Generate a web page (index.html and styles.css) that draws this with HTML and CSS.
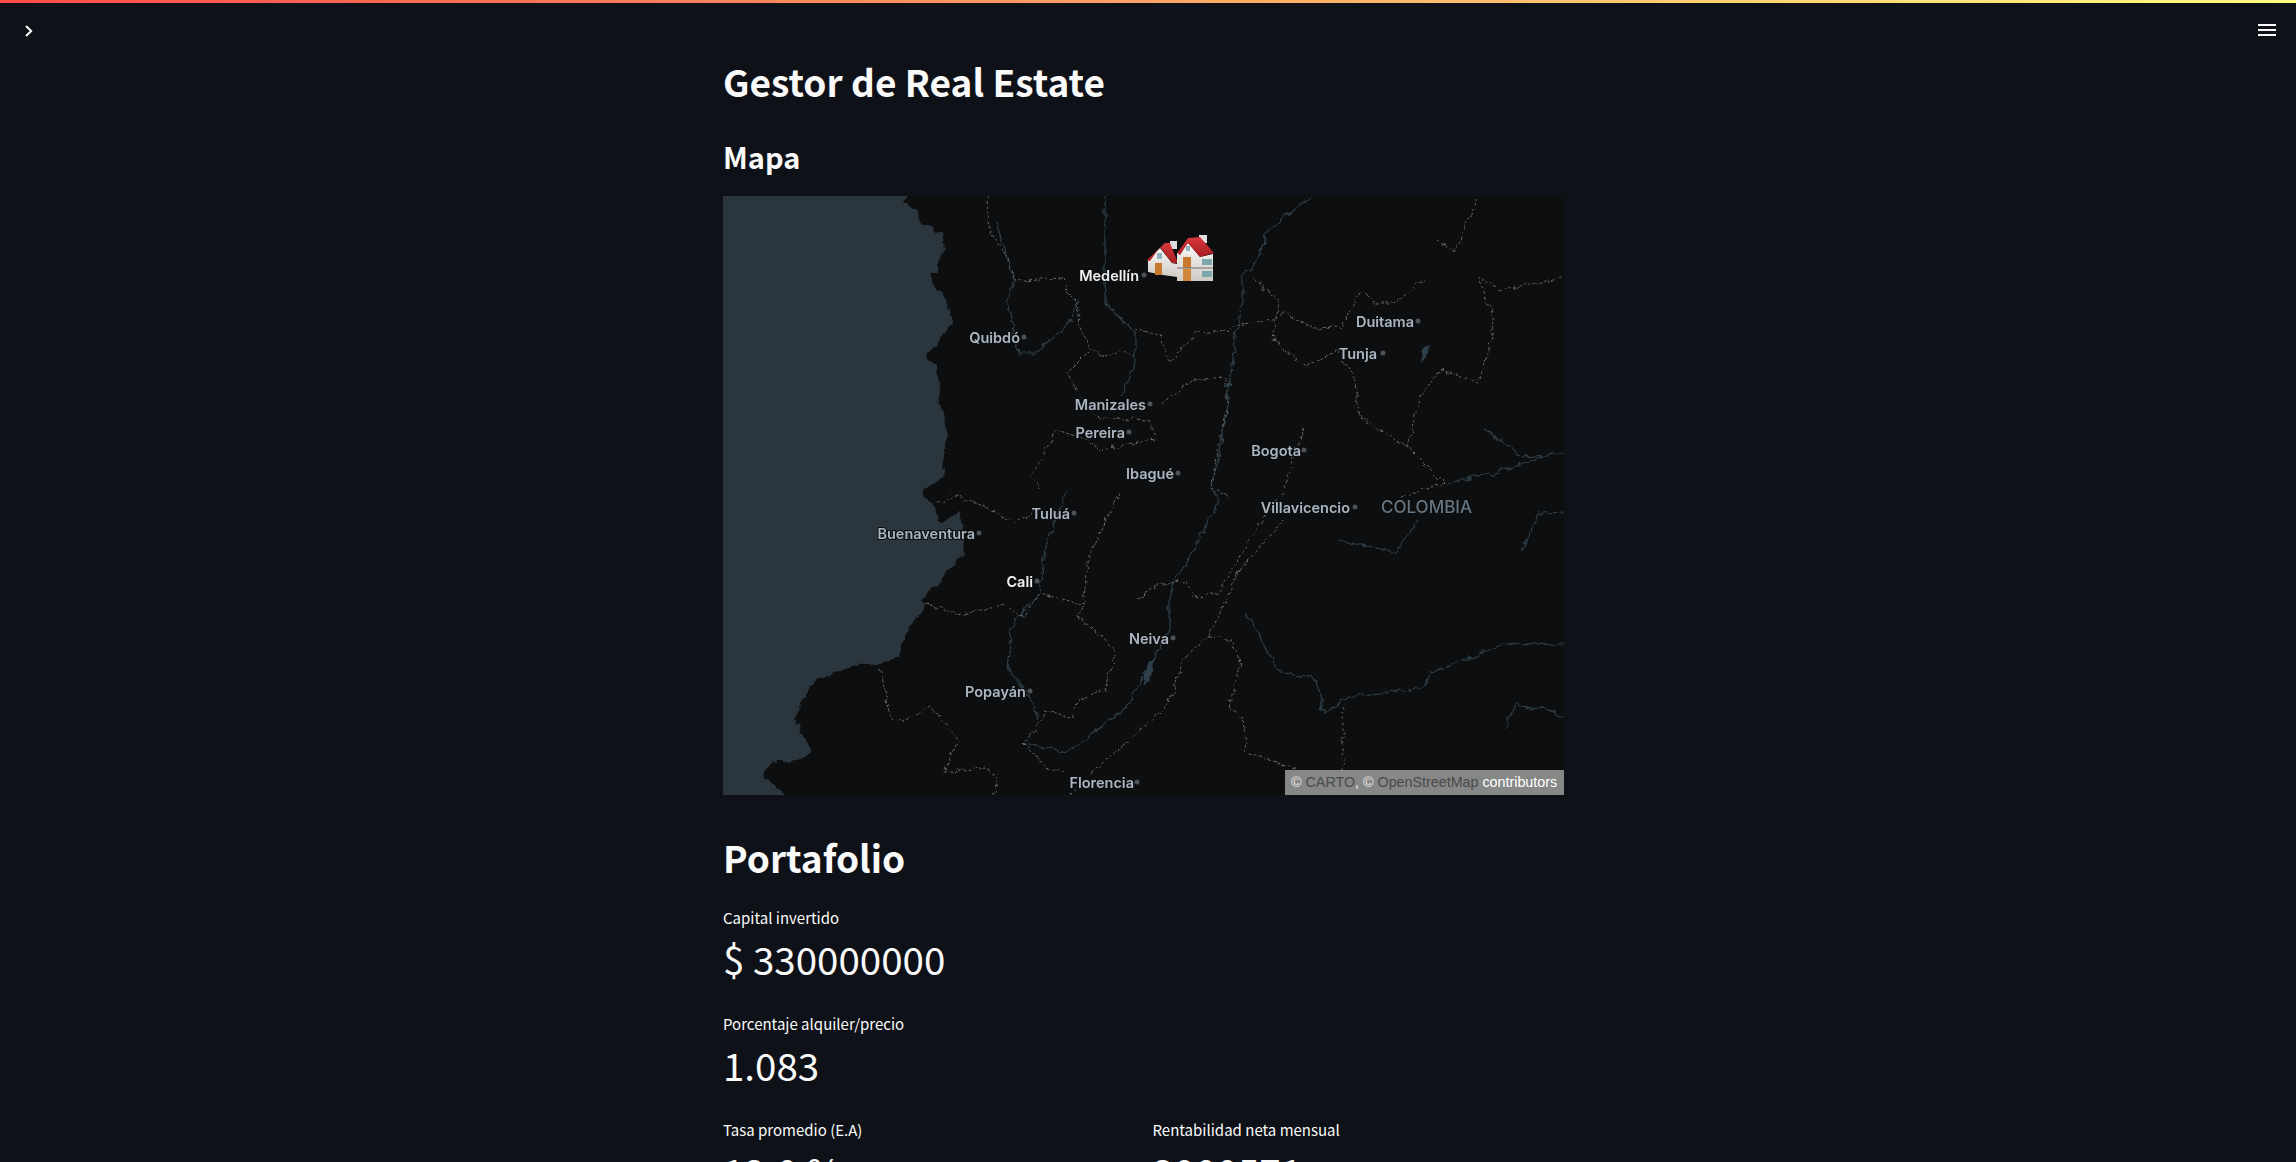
FILE: index.html
```html
<!DOCTYPE html>
<html lang="es">
<head>
    <meta charset="UTF-8">
    <meta name="viewport" content="width=device-width, initial-scale=1.0">
    <title>Gestor de Real Estate</title>
    <link rel="stylesheet" href="styles.css">
</head>
<body>
    <div class="top-line"></div>

    <button class="icon-btn sidebar-btn" aria-label="Abrir barra lateral">
        <svg width="8" height="12" viewBox="0 0 8 12"><path d="M1 1l5.2 5L1 11" fill="none" stroke="#fafafa" stroke-width="2"/></svg>
    </button>
    <button class="icon-btn menu-btn" aria-label="Menu">
        <svg width="18" height="12" viewBox="0 0 18 12"><path d="M0 0h18v2H0zM0 5h18v2H0zM0 10h18v2H0z" fill="#fafafa"/></svg>
    </button>

    <main class="app">
        <div class="content">
            <h1 class="page-title">Gestor de Real Estate</h1>
            <h3 class="section-small">Mapa</h3>

            <div class="map">
                <svg class="map-svg" viewBox="0 0 841 599" width="841" height="599">
                    <defs>
                        <!-- roughens the hand drawn lines so they look like real borders -->
                        <filter id="rough-coast" x="-5%" y="-5%" width="110%" height="110%">
                            <feTurbulence type="fractalNoise" baseFrequency="0.09" numOctaves="3" seed="4"/>
                            <feDisplacementMap in="SourceGraphic" scale="9" xChannelSelector="R" yChannelSelector="G"/>
                        </filter>
                        <filter id="rough-line" x="-5%" y="-5%" width="110%" height="110%">
                            <feTurbulence type="fractalNoise" baseFrequency="0.12" numOctaves="2" seed="9"/>
                            <feDisplacementMap in="SourceGraphic" scale="8" xChannelSelector="R" yChannelSelector="G"/>
                        </filter>
                        <linearGradient id="wall" x1="0" y1="0" x2="0" y2="1">
                            <stop offset="0" stop-color="#fbfaf8"/>
                            <stop offset="1" stop-color="#cfcac4"/>
                        </linearGradient>
                        <linearGradient id="roof" x1="0" y1="0" x2="0" y2="1">
                            <stop offset="0" stop-color="#d8383a"/>
                            <stop offset="1" stop-color="#a81c22"/>
                        </linearGradient>
                    </defs>
                    <rect width="841" height="599" fill="#0d0e0f"/>
                    <!-- sea -->
                    <path class="sea" filter="url(#rough-coast)" d="M-30 -30H184V0L181 7 192 14 200 27 219 37 222 54 216 64 216 77 207 77 211 91 222 101 230 127 214 147 202 159 214 171 217 194 225 241 219 261 222 277 203 294 200 301 211 309 219 327 232 318 236 314 238 324 241 357 225 374 214 387 200 404 203 411 184 431 176 461 157 467 133 469 111 476 92 484 78 507 73 524 81 541 89 554 67 567 51 564 40 579 62 599V630H-30Z"/>

                    <!-- rivers -->
                    <g class="rivers" filter="url(#rough-line)">
                        <path d="M588 0L542 37 539 57 520 81 520 107 512 144 506 194 496 261 488 291 496 307 463 367 447 394 447 431 425 471 404 511 344 557 301 547"/>
                        <path d="M382 0L382 107 412 137 412 167 398 201"/>
                        <path d="M344 294L322 351 317 397 290 427 284 471 311 507 314 524"/>
                        <path d="M273 27L292 87 284 104 295 157 311 157 349 124 355 104"/>
                        <path d="M523 417L555 474 593 484 601 517 626 501 702 491 707 477 783 447 840 449"/>
                        <path d="M615 344L672 356 696 324"/>
                        <path d="M799 354L816 317 843 316"/>
                        <path d="M780 536L794 507 805 514 821 511 840 521"/>
                        <path d="M761 232L799 261 823 259 843 257M723 287L772 277 823 259"/>
                        <path class="lake" d="M425 471L430 462 428 478 420 490Z"/>
                        <path class="lake" d="M700 155L706 150 705 162 700 165Z"/>
                    </g>

                    <!-- department borders -->
                    <g class="borders" filter="url(#rough-line)">
                        <path d="M265 0L263 17 268 37 284 61 292 84 341 82 347 101 357 111 355 127 366 151 382 161 398 154 412 161"/>
                        <path d="M412 134L436 139 447 166 474 136 506 134 512 129 550 124 561 116 588 132 618 131 639 94 650 107 669 107 702 84"/>
                        <path d="M366 154L344 176 355 197 376 221 425 224 433 244 409 247 376 254 366 244 333 234 309 281 317 294"/>
                        <path d="M439 207L469 184 504 181 504 207 488 291 507 301"/>
                        <path d="M528 81L555 104 550 144 582 171 615 154 631 181 637 221 685 251 721 287 680 301"/>
                        <path d="M685 251L696 201 718 174 756 187 772 127 756 81 777 94 837 82"/>
                        <path d="M580 232L561 294M715 44L731 56 750 14 756 4"/>
                        <path d="M203 407L235 419 279 409 301 421 317 397 360 409 355 421 385 446 393 457 382 494 355 504 349 521 322 514 317 527 301 547 322 571 344 577"/>
                        <path d="M360 407L366 361 387 314 398 294"/>
                        <path d="M414 404L431 391 463 384 471 401 496 397 528 341 561 294"/>
                        <path d="M517 374L561 324M517 374L485 441 460 464 447 507 376 571 347 597"/>
                        <path d="M485 441L509 444 517 467 506 511 520 521 523 557 572 572"/>
                        <path d="M157 474L168 521 179 526 208 511 222 527 235 544 222 577 263 571 276 587 268 599"/>
                        <path d="M620 511L620 574"/>
                        <path d="M214 307L230 299 263 311 290 327 309 317"/>
                    </g>

                    <!-- places -->
                    <g class="dots">
                        <circle cx="421" cy="79" r="2.5"/><circle cx="301" cy="141" r="2.5"/><circle cx="695" cy="125" r="2.5"/>
                        <circle cx="660" cy="157" r="2.5"/><circle cx="427" cy="208" r="2.5"/><circle cx="406" cy="236" r="2.5"/>
                        <circle cx="581" cy="254" r="2.5"/><circle cx="455" cy="277" r="2.5"/><circle cx="632" cy="311" r="2.5"/>
                        <circle cx="351" cy="317" r="2.5"/><circle cx="256" cy="337" r="2.5"/><circle cx="314" cy="385" r="2.5"/>
                        <circle cx="450" cy="442" r="2.5"/><circle cx="307" cy="495" r="2.5"/><circle cx="414" cy="586" r="2.5"/>
                    </g>
                    <g class="labels">
                        <text class="major" x="416" y="79">Medellín</text>
                        <text x="297" y="141">Quibdó</text>
                        <text x="691" y="125">Duitama</text>
                        <text x="654" y="157">Tunja</text>
                        <text x="423" y="208">Manizales</text>
                        <text x="402" y="236">Pereira</text>
                        <text x="578" y="254">Bogota</text>
                        <text x="451" y="277">Ibagué</text>
                        <text x="627" y="311">Villavicencio</text>
                        <text x="347" y="317">Tuluá</text>
                        <text x="252" y="337">Buenaventura</text>
                        <text class="major" x="310" y="385">Cali</text>
                        <text x="446" y="442">Neiva</text>
                        <text x="303" y="495">Popayán</text>
                        <text x="411" y="586">Florencia</text>
                        <text class="country" x="749" y="311">COLOMBIA</text>
                    </g>

                    <!-- houses marker -->
                    <g class="houses">
                        <rect x="447" y="45" width="7" height="8" fill="#dcdcdc"/>
                        <path d="M425 64L437 52 449 67 454 68V81L440 79 425 76Z" fill="url(#wall)"/>
                        <path d="M424 64L442 47 447 47 455 67 449 67 437 51 427 65Z" fill="url(#roof)"/>
                        <rect x="432" y="67" width="7" height="12" fill="#c9792d"/>
                        <rect x="434" y="57" width="5" height="6" fill="#8fb4bb"/>
                        <rect x="476" y="39" width="8" height="8" fill="#e2e2e2"/>
                        <path d="M454 57L465 47 477 61 490 58V85H454Z" fill="url(#wall)"/>
                        <path d="M454 57L465 42 477 41 491 57 477 61 465 47 457 59Z" fill="url(#roof)"/>
                        <rect x="460" y="61" width="8" height="11" fill="#c9792d"/>
                        <rect x="460" y="73" width="8" height="12" fill="#d08738"/>
                        <rect x="479" y="63" width="10" height="6" fill="#7da6ad"/>
                        <rect x="479" y="75" width="10" height="6" fill="#7da6ad"/>
                        <rect x="463" y="50" width="4" height="5" fill="#8fb4bb"/>
                        <rect x="454" y="71.5" width="36" height="1" fill="#6d6d6d"/>
                    </g>
                </svg>
                <div class="attribution"><span class="attr-dim"><span class="attr-c">©</span> CARTO</span><span class="attr-c">, ©</span> <span class="attr-dim">OpenStreetMap</span> contributors</div>
            </div>

            <h2 class="section-big">Portafolio</h2>

            <div class="metric">
                <div class="metric-label">Capital invertido</div>
                <div class="metric-value">$ 330000000</div>
            </div>
            <div class="metric">
                <div class="metric-label">Porcentaje alquiler/precio</div>
                <div class="metric-value">1.083</div>
            </div>
            <div class="metric-row">
                <div class="metric">
                    <div class="metric-label">Tasa promedio (E.A)</div>
                    <div class="metric-value">12.0 %</div>
                </div>
                <div class="metric">
                    <div class="metric-label">Rentabilidad neta mensual</div>
                    <div class="metric-value">3000571</div>
                </div>
            </div>
        </div>
    </main>
</body>
</html>
```

FILE: styles.css
```css
html, body {
    margin: 0;
    padding: 0;
    height: 100%;
    overflow: hidden;
}

body {
    background-color: #0e1117;
    color: #fafafa;
    font-family: "Noto Sans CJK SC", "Noto Sans", sans-serif;
}

.top-line {
    position: absolute;
    top: 0;
    left: 0;
    right: 0;
    height: 3px;
    background-image: linear-gradient(90deg, #ff4b4b, #fffd80);
}

.icon-btn {
    position: absolute;
    display: flex;
    padding: 0;
    border: 0;
    background: none;
}

.sidebar-btn {
    top: 25px;
    left: 25px;
}

.menu-btn {
    top: 24px;
    right: 20px;
}

.app {
    display: flex;
    justify-content: center;
    padding-right: 9px;
}

.content {
    width: 841px;
    padding-top: 56px;
}

.page-title {
    margin: 0 0 30px;
    font-size: 37px;
    line-height: 50px;
    font-weight: 600;
}

.section-small {
    margin: 0 0 20px;
    font-size: 29px;
    line-height: 40px;
    font-weight: 600;
}

.map {
    position: relative;
    height: 599px;
    margin-bottom: 37px;
    overflow: hidden;
}

.map-svg {
    display: block;
    filter: blur(0.4px);
}

.sea {
    fill: #2c353d;
}

.rivers path {
    fill: none;
    stroke: #2f404b;
    stroke-width: 1.2;
}

.rivers .lake {
    fill: #2f404b;
}

.borders path {
    fill: none;
    stroke: #66696b;
    stroke-width: 1;
    stroke-dasharray: 3 2;
}

.dots circle {
    fill: #4b5157;
}

.labels text {
    font-family: Inter, "Noto Sans", sans-serif;
    font-size: 14.5px;
    font-weight: 600;
    fill: #aab6c2;
    text-anchor: end;
    dominant-baseline: central;
    paint-order: stroke;
    stroke: #0d0e0f;
    stroke-width: 2px;
}

.labels .major {
    fill: #eef0f2;
}

.labels .country {
    font-size: 17px;
    font-weight: 500;
    fill: #647480;
}

.attribution {
    position: absolute;
    right: 0;
    bottom: 0;
    width: 279px;
    height: 25px;
    box-sizing: border-box;
    padding-left: 6px;
    background-color: rgba(255, 255, 255, 0.5);
    color: #fff;
    font-family: "Liberation Sans", Arial, sans-serif;
    font-size: 14.3px;
    line-height: 25px;
    white-space: nowrap;
}

.attr-dim {
    color: #4a4a4a;
}

.attr-c {
    color: #eee;
}

.section-big {
    margin: 0 0 24px;
    font-size: 37px;
    line-height: 50px;
    font-weight: 600;
}

.metric {
    margin-bottom: 26px;
}

.metric-label {
    font-size: 15px;
    line-height: 24px;
}

.metric-value {
    margin-top: 1px;
    font-size: 38.5px;
    line-height: 55px;
}

.metric-row {
    display: grid;
    grid-template-columns: 1fr 1fr;
    gap: 18px;
}
```
